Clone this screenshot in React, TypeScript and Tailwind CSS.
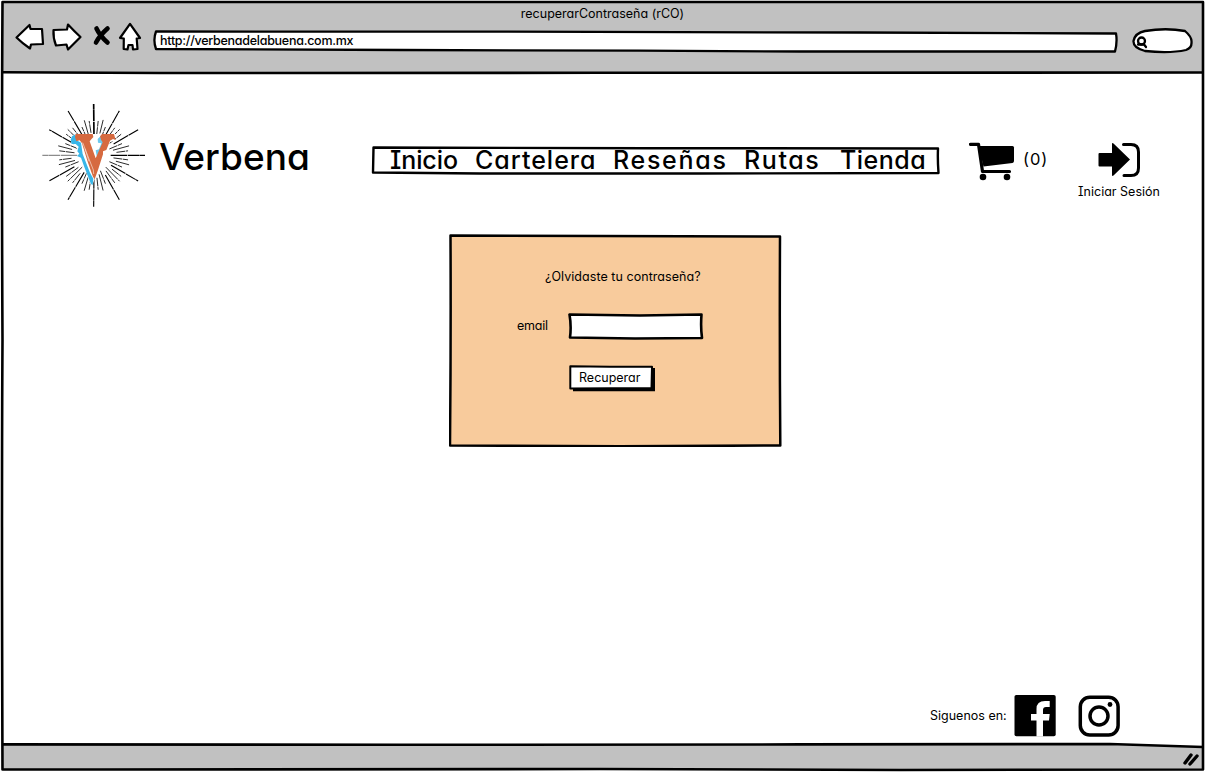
import React from "react";

const ink = "font-['Inter','Liberation_Sans',sans-serif] text-black whitespace-nowrap";

function Rays() {
  const rays = Array.from({ length: 48 }, (_, i) => i);
  return (
    <g stroke="#000" fill="none">
      {rays.map((i) => {
        const angle = (i * 7.5 * Math.PI) / 180;
        const long = i % 4 === 0;
        const r2 = long ? 154 : i % 2 === 0 ? 110 : i % 3 === 0 ? 92 : 104;
        const r1 = 50 + (i % 3) * 9;
        return (
          <line
            key={i}
            x1={192 + Math.cos(angle) * r1}
            y1={196 + Math.sin(angle) * r1}
            x2={191 + Math.cos(angle) * r2}
            y2={196 + Math.sin(angle) * r2}
            strokeWidth={i === 36 ? 5 : long ? 3.4 : 2.5}
            strokeDasharray={i % 2 ? "26 2 19 2" : "50 2 34 1"}
            opacity={i === 24 ? 0.45 : 1}
          />
        );
      })}
    </g>
  );
}

function Logo() {
  return (
    <svg className="block h-[110px] w-[110px]" viewBox="27 30 330 330">
      <Rays />
      <path
        d="M134 132L190 132L258 132L254 152L240 156L206 240L193 270L187 284L180 278L156 214L141 197L144 180L134 166L124 160L122 144Z"
        fill="#fff"
      />
      <path
        d="M136 133L126 139L122 149L125 162L137 162L146 170L142 184L148 191L141 198L153 203L164 234L183 282L188 285L190 266L180 248L158 192L153 158L140 151Z"
        fill="#38b6e8"
      />
      <path d="M213 137L203 147L204 158L214 160L207 178L197 181L200 198L206 192L220 158Z" fill="#6cc9ee" />
      <path
        d="M137 132L188 132L190 141L184 148L179 154L197 205L218 157L213 149L210 139L216 132L252 132L257 150L249 147L240 152L229 180L219 184L219 193L204 240L194 268L189 260L173 215L156 160L149 151L139 154L135 141Z"
        fill="#d66a40"
      />
      <path d="M158 158L190 240L191 252M165 176L177 214" fill="none" stroke="#f6e4da" strokeWidth="2" />
    </svg>
  );
}

function BrowserBar() {
  return (
    <header className="flex h-[73px] flex-col bg-[#c1c1c1] pt-[5px]">
      <div className={`${ink} h-[17px] text-center text-[12.5px] font-[430] leading-[18px] [font-feature-settings:'cv11','cv08']`}>
        recuperarContraseña (rCO)
      </div>
      <div className="flex items-start">
        <svg className="block h-[32px] w-[153px] shrink-0" viewBox="0 22 153 32" fill="#fff" stroke="#000" strokeWidth="2.2" strokeLinejoin="round">
          <path d="M16.5 37.5L29.5 25L30.5 29L42 29L43 44L31 44.5L30 48.5Q22 43 16.5 37.5Z" />
          <path d="M53.5 30L67 29.5L68 24.5Q74 31 80.500 37L68 49.500L66.500 44.500L56 45.500Q53 38 53.500 30Z" />
          <path d="M96.500 28.500Q100 36 107.500 42.500M107.500 28.500Q100 35 96 42.500" strokeWidth="4.600" strokeLinecap="round" fill="none" />
          <path d="M130 23.800L140 38L136.700 38.500L137.500 49L133 49.500L132.500 45L128.500 45L127.500 49.500L123.700 49L123.800 38.500L120 38Z" />
        </svg>
        <div className="relative mt-[7px] h-[24px] w-[966px] shrink-0">
          <svg className="absolute inset-0 h-full w-full" viewBox="153 29 966 24">
            <path
              d="M156 31.500L500 31.700L860 32.500L1116 33.500Q1117.500 42 1115 51.500L800 51.500L640 50.700L400 50L156 49Q152.800 40 156 31.500Z"
              fill="#fff"
              stroke="#000"
              strokeWidth="2.300"
              strokeLinejoin="round"
            />
          </svg>
          <div className={`${ink} relative pl-[7px] pt-[3px] text-[12.5px] font-[450] leading-[18px] tracking-[-0.27px] [font-feature-settings:'cv11','cv08']`}>
            http://verbenadelabuena.com.mx
          </div>
        </div>
        <svg className="ml-[11px] mt-[5px] block h-[28px] w-[64px] shrink-0" viewBox="1130 27 64 28" fill="#fff" stroke="#000" strokeWidth="2.300">
          <path d="M1145 31Q1166 27.500 1185 31Q1192 37 1191.500 42Q1192 48 1186 50Q1170 53.500 1145 51Q1133 48 1133.500 41Q1135 33 1145 31Z" />
          <circle cx="1141.500" cy="41" r="3.500" />
          <path d="M1138 44.500L1144 44.500L1146 47" fill="none" strokeLinecap="round" />
        </svg>
      </div>
    </header>
  );
}

function Nav() {
  return (
    <nav className="relative ml-[62px] mt-[73px] h-[29px] w-[569px] shrink-0">
      <svg className="absolute inset-0 h-full w-full" viewBox="371 146 569 29">
        <path
          d="M373.500 147.500L650 148.200L938 148.500Q937.500 160 938.500 173L700 173.500L480 173.500L373 172.500Z"
          fill="#fff"
          stroke="#000"
          strokeWidth="2.400"
          strokeLinejoin="round"
        />
      </svg>
      <div className={`${ink} relative flex pl-[19px] text-[25px] font-[450] leading-[28px] [font-feature-settings:'cv11','cv08']`}>
        <span className="w-[85px] tracking-[-0.1px]">Inicio</span>
        <span className="w-[138px] tracking-[1px]">Cartelera</span>
        <span className="w-[131px] tracking-[1.7px]">Reseñas</span>
        <span className="w-[96px] tracking-[1.6px]">Rutas</span>
        <span className="tracking-[0.5px]">Tienda</span>
      </div>
    </nav>
  );
}

function TopRow() {
  return (
    <div className="flex h-[161px] items-start">
      <div className="ml-[39px] mt-[27px] shrink-0">
        <Logo />
      </div>
      <h1 className={`${ink} ml-[10px] mt-[63px] w-[150px] shrink-0 text-[37px] leading-[42px] font-medium tracking-[0.05px] [font-feature-settings:'cv11','cv08']`}>
        Verbena
      </h1>
      <Nav />
      <svg className="ml-[29px] mt-[68px] block h-[41px] w-[46px] shrink-0" viewBox="968.500 141 46 41">
        <path d="M970 144.300L978 144.300L982 171.500L1009 171.500" fill="none" stroke="#000" strokeWidth="3.200" strokeLinecap="round" strokeLinejoin="round" />
        <path d="M978 146L1012 146Q1013.500 146 1013.500 147.500L1013.500 161Q1013.500 162.500 1012 163L983 166.500Z" />
        <circle cx="982.500" cy="177" r="3.300" />
        <circle cx="1006.500" cy="177" r="3.300" />
      </svg>
      <span className={`${ink} ml-[8px] mt-[75px] w-[28px] shrink-0 text-[16.500px] leading-[22px] tracking-[0.9px] [font-feature-settings:'cv11']`}>(0)</span>
      <div className="ml-[23px] mt-[68px] flex w-[90px] shrink-0 flex-col items-center">
        <svg className="block h-[38px] w-[44px]" viewBox="1097 141 44 38">
          <path d="M1099.500 153L1112 153L1112 144Q1112 142.500 1113.500 143.500L1130 159.500L1113.500 175.500Q1112 176.500 1112 175L1112 166.500L1099.500 166.500Q1098.500 166.500 1098.500 165.500L1098.500 154Q1098.500 153 1099.500 153Z" />
          <path d="M1123.500 144.500L1131 144.500Q1138.500 144.500 1138.500 152L1138.500 168Q1138.500 175.500 1131 175.500L1124 175.500" fill="none" stroke="#000" strokeWidth="3" strokeLinecap="round" />
        </svg>
        <span className={`${ink} mt-[4px] text-[12.5px] leading-[18px] [font-feature-settings:'cv11','cv08']`}>Iniciar Sesión</span>
      </div>
    </div>
  );
}

function RecoverCard() {
  return (
    <section className="relative ml-[449px] h-[213px] w-[333px]">
      <svg className="absolute inset-0 h-full w-full" viewBox="449 234 333 213">
        <path
          d="M450.500 235.500L600 236L780 236.500Q779.500 340 780.300 445.500L620 446.300L450 445.500Q451 340 450.500 235.500Z"
          fill="#f8cb9c"
          stroke="#000"
          strokeWidth="2.500"
          strokeLinejoin="round"
        />
      </svg>
      <form className="relative flex flex-col" onSubmit={(e) => e.preventDefault()}>
        <p className={`${ink} ml-[96px] mt-[34px] text-[12.5px] font-[430] leading-[18px] tracking-[0.05px] [font-feature-settings:'cv11','cv08']`}>
          ¿Olvidaste tu contraseña?
        </p>
        <div className="mt-[26px] flex h-[30px] items-start">
          <label htmlFor="email" className={`${ink} ml-[68px] mt-[5px] w-[51px] text-[12.5px] font-[430] leading-[18px] tracking-[-0.2px] [font-feature-settings:'cv11']`}>
            email
          </label>
          <div className="relative h-[28px] w-[136px]">
            <svg className="absolute inset-0 h-full w-full" viewBox="568 312 136 28">
              <path
                d="M569.500 314.500L640 315.500L701.500 314.500Q700.500 327 702 338L635 338.500L570 337.500Q571.500 326 569.500 314.500Z"
                fill="#fff"
                stroke="#000"
                strokeWidth="2.600"
                strokeLinejoin="round"
              />
            </svg>
            <input id="email" className="relative h-full w-full bg-transparent px-2 text-[12.5px] outline-none" />
          </div>
        </div>
        <button className="relative ml-[119px] mt-[23px] flex h-[28px] w-[88px] items-start">
          <svg className="absolute inset-0 h-full w-full" viewBox="568 365 88 28">
            <path d="M573 368L655 368L655 391.300L573 391.300Z" />
            <path d="M570.300 366.300L610 366.800L652 366.800L651.500 388L570.300 388.500Z" fill="#fff" stroke="#000" strokeWidth="2" strokeLinejoin="round" />
          </svg>
          <span className={`${ink} relative block pl-[11px] pt-[4px] text-left text-[12.5px] font-[430] leading-[18px] [font-feature-settings:'cv11','cv08']`}>
            Recuperar
          </span>
        </button>
      </form>
    </section>
  );
}

function Social() {
  return (
    <div className="mt-auto flex h-[51px] items-start pl-[930px]">
      <span className={`${ink} mt-[14px] w-[84px] text-[12.5px] leading-[18px] [font-feature-settings:'cv11','cv08']`}>Siguenos en:</span>
      <svg className="mt-[2px] block h-[42px] w-[42px]" viewBox="1014 695 42 42">
        <rect x="1014.500" y="695" width="41.200" height="41.200" rx="1.800" />
        <path d="M1036.500 736.500L1036.500 720.500L1031 720.500L1031 714L1036.500 714L1036.500 709Q1036.500 701 1045 701L1049.700 701L1049.700 707L1046 707Q1043 707 1043 710L1043 714L1049.700 714L1049 720.500L1043 720.500L1043 736.500Z" fill="#fff" />
      </svg>
      <svg className="ml-[22px] mt-[2px] block h-[43px] w-[43px]" viewBox="1078 695 43 43" fill="none" stroke="#000" strokeWidth="3.500">
        <rect x="1080.300" y="697.300" width="37.800" height="37.800" rx="9.500" />
        <circle cx="1099" cy="716" r="9" />
        <circle cx="1110" cy="704.500" r="2.400" fill="#000" stroke="none" />
      </svg>
    </div>
  );
}

export default function App() {
  return (
    <div className="relative flex h-[772px] w-[1205px] flex-col overflow-hidden bg-white">
      <BrowserBar />
      <TopRow />
      <RecoverCard />
      <Social />
      <footer className="h-[28px] shrink-0" />
      <svg className="pointer-events-none absolute inset-0 h-full w-full" viewBox="0 0 1205 772" fill="none" stroke="#000" strokeWidth="2.600">
        <path d="M0 0H1205V772H0ZM2 2V770H1203V2Z" fill="#fff" fillRule="evenodd" stroke="none" />
        <path d="M2.500 744.500L1110 744.500L1202 747L1202 769.500L2.500 769.500Z" fill="#c1c1c1" stroke="none" />
        <path d="M2.500 2L602 2L1203 2Q1202 380 1203 769.500L900 770L600 769L100 769.500L2.500 769.500Q1.500 500 2.500 340Q1.500 150 2.500 2Z" strokeLinejoin="round" />
        <path d="M2.500 72.200L160 73L600 72.800L1203 72.500" />
        <path d="M2.500 744.400L400 744.800L800 744.400L1110 744L1203 747" />
        <path d="M1185 763L1191 755M1190 764L1197 756" strokeWidth="3.400" strokeLinecap="round" />
      </svg>
    </div>
  );
}
